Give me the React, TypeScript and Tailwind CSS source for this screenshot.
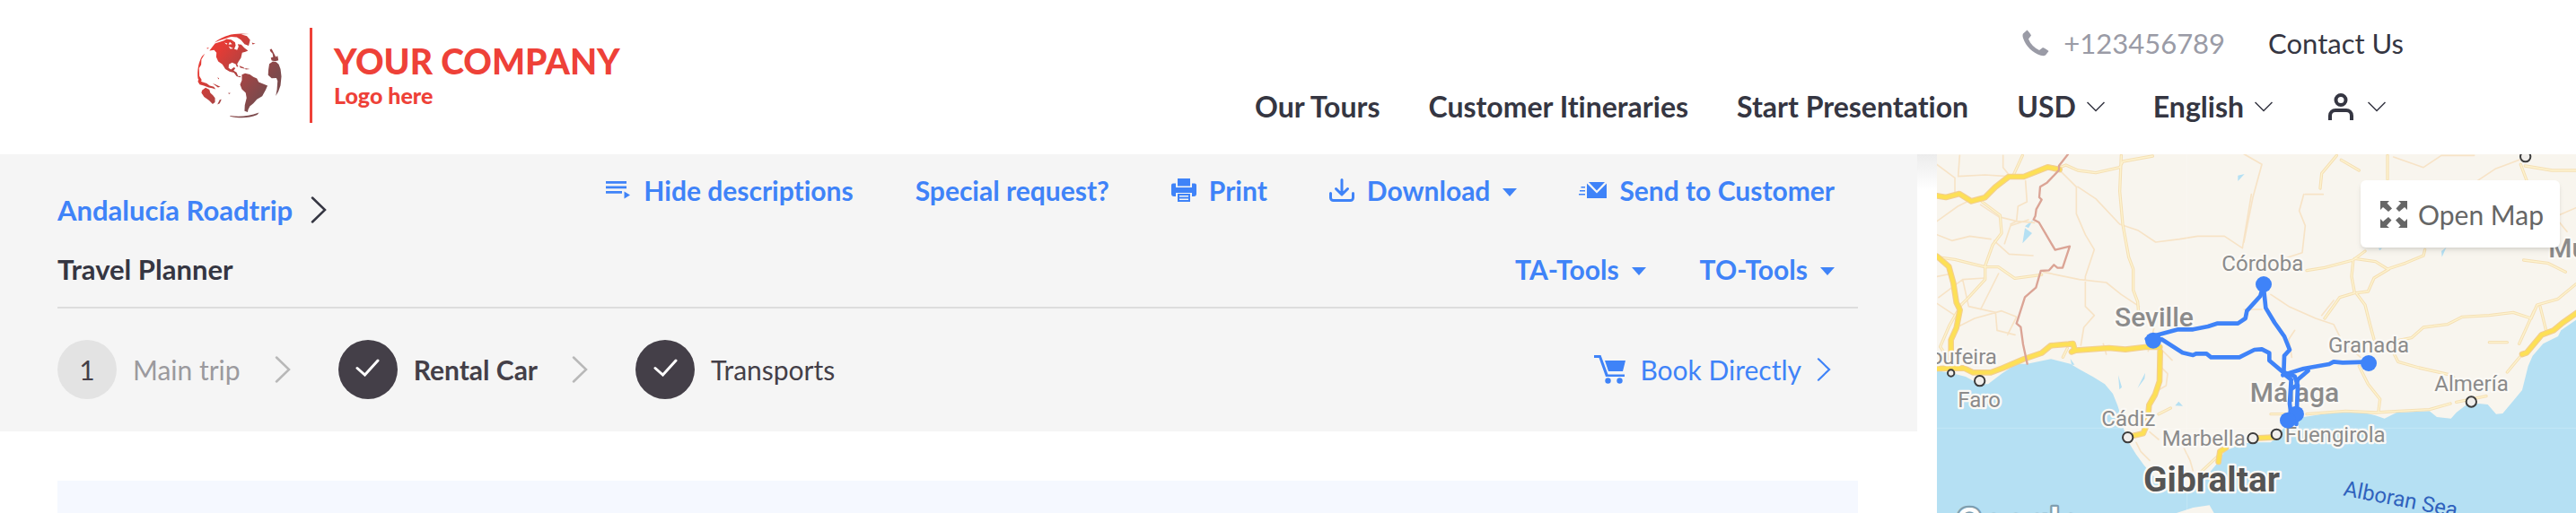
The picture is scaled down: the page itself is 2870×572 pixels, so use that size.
import type { ReactNode } from "react";

const navLinks = ["Our Tours", "Customer Itineraries", "Start Presentation"];

const steps = [
  { label: "Main trip", done: false, tone: "text-[#9b9a9e]" },
  { label: "Rental Car", done: true, tone: "font-bold text-[#443f48]" },
  { label: "Transports", done: true, tone: "text-[#443f48]" },
];

function ChevronDown() {
  return (
    <svg className="h-3 w-5 shrink-0" viewBox="0 0 20 12" fill="none" stroke="currentColor" strokeWidth="1.5" aria-hidden="true">
      <path d="M0.5 1 10 10.5 19.5 1" />
    </svg>
  );
}

function ChevronRight({ className }: { className: string }) {
  return (
    <svg className={className} viewBox="0 0 18 30" fill="none" stroke="currentColor" strokeWidth="2.5" strokeLinecap="round" aria-hidden="true">
      <path d="M2 1.5 16 15 2 28.5" />
    </svg>
  );
}

function Caret() {
  return (
    <svg className="mt-1 h-[9px] w-4 shrink-0" viewBox="0 0 16 9" fill="currentColor" aria-hidden="true">
      <path d="M0 0h16L8 9z" />
    </svg>
  );
}

function Globe() {
  return (
    <svg className="size-24 shrink-0" viewBox="59 45 289 292" fill="url(#globe)" aria-hidden="true">
      <defs>
        <linearGradient id="globe" gradientUnits="userSpaceOnUse" x1="130" y1="110" x2="290" y2="240">
          <stop offset="0" stopColor="#e53b35" />
          <stop offset="0.55" stopColor="#a64444" />
          <stop offset="1" stopColor="#7c4a4c" />
        </linearGradient>
      </defs>
      <path d="M118 80C145 56 185 45 236 51l-28 1 20 6 11 13-5 20-14-6-12-14-14-9-20-2-18 6-20 6z" />
      <path d="M101 107l19-24 30-10 9-5 16 2 13 9 2 11-5 11 10 4 5-11-3-9 12 2 11 11 12 9-9 4-11 3-4 18-8 12-5 9 4 8-5 1-4-9-12-5-11 6-1 12 8 5 10-7 5 3-6 8 10 6 5 12 10 1-3 4-12-4-9-12-15-4-14-8-10-16-14-10-7-15 1-15-8-9z" />
      <path d="M211 189l11-5 16 4 12 8 12 6 6 12 30 12-6 14-12 22-18 10-12 14-12 10-6 12-1 8-11-4 1-20 6-24-3-18-13-12-6-16 6-14z" />
      <path d="M304 152l12-8 12 2 8 8 6 16 3 25-3 30-7 20-9 16 4-22 2-29-4-10-16 1-12-11 1-18z" />
      <path d="M306 103l6-2 7 14 7 14 6-4 3 15-11 3-12-2-3-9 8-3-2-12-8-8z" />
      <path d="M76 242l12-9 13 7 3 10 9 9 7 9v14l-8 6-12-12-17-12-9-14z" />
      <path d="M62 202c-3-28 2-56 14-76l10-9-12 20-1 18-7 12 1 26 8 14-5 7zM64 205l12 8 16 5 10 8 14 4 6 8-12-4-12-2-16-6-14-4-6-10z" />
      <path d="M171 328c32 5 62 2 98-11l-6 8c-30 12-60 12-92 5zM128 198l6 3-2 4zM112 218l10 4 16 8-8 2zM136 274l6-2-6 14-8 4zM165 250l8 1-6 4zM92 98l8-1-6 5zM245 80l12 4-10 2zM202 158l14 6 6 5-16-4zM222 167l16 3-14 1z" />
      <path d="M152 80l10 3-3 4zM170 78l8 7-12 2zM166 92l16 8-10 1zM186 70l8 6-4 3zM176 62l12 2-10 2z" fill="#fff" />
    </svg>
  );
}

function PhoneIcon() {
  return (
    <svg className="size-[30px]" viewBox="0 0 30 30" fill="currentColor" aria-hidden="true">
      <path d="M5.500.5c1.800 1.800 3.600 4 4.500 6L7 10.500c2.500 6 6.500 10 12 12.500l4-3c2.500.8 4.500 2.300 6.500 4l-3.500 4.500c-1.500 1-3.500.8-5.500.2C11.500 26 4 18.500 1 9.500.4 7.500.3 5.700 1 4.500z" />
    </svg>
  );
}

function UserIcon() {
  return (
    <svg className="h-[30px] w-7" viewBox="0 0 28 30" fill="none" stroke="currentColor" strokeWidth="4" aria-hidden="true">
      <circle cx="14" cy="7.500" r="5.500" />
      <path d="M2 30v-5a6 6 0 0 1 6-6h12a6 6 0 0 1 6 6v5" />
    </svg>
  );
}

function DescriptionIcon() {
  return (
    <svg className="h-5 w-7" viewBox="0 0 28 20" fill="currentColor" aria-hidden="true">
      <path d="M0 0h23v2.700H0zM0 5.500h23v2.700H0zM0 11h18v2.700H0zM20.500 11.500l6.500 4-6.500 4z" />
    </svg>
  );
}

function PrintIcon() {
  return (
    <svg className="h-[26px] w-7" viewBox="0 0 28 26" fill="currentColor" aria-hidden="true">
      <path d="M7 0h14v8.500H7z" />
      <path d="M2 5.500h3V10h18V5.500h3a2 2 0 0 1 2 2V17a3 3 0 0 1-3 3h-2v-4H5v4H3a3 3 0 0 1-3-3V7.500a2 2 0 0 1 2-2z" />
      <path fillRule="evenodd" d="M7 17h14v9H7zM9 19v1.500h10V19zM9 22.500V24h10v-1.500z" />
    </svg>
  );
}

function DownloadIcon() {
  return (
    <svg className="h-[26px] w-7" viewBox="0 0 28 26" fill="none" stroke="currentColor" strokeWidth="3" strokeLinecap="round" strokeLinejoin="round" aria-hidden="true">
      <path d="M14 1.500v16M7.500 11.500l6.500 6.500 6.500-6.500M1.500 16.500v5a3 3 0 0 0 3 3h19a3 3 0 0 0 3-3v-5" />
    </svg>
  );
}

function SendIcon() {
  return (
    <svg className="h-[18px] w-[31px]" viewBox="0 0 31 18" fill="currentColor" aria-hidden="true">
      <path d="M11 0h18l-9 9.500zM9 1.500l11 11 11-11V18H9zM2.500 5H7v1.500H2.500zM1 9h6v1.500H1zM0 13h7v1.500H0z" />
    </svg>
  );
}

function CartIcon() {
  return (
    <svg className="h-8 w-[35px]" viewBox="0 0 35 32" fill="currentColor" aria-hidden="true">
      <path d="M0 0h7.500l8 21.500H34V24H13L5.500 3H0zM12 6h23l-3 12H16z" />
      <circle cx="15.500" cy="28.500" r="3.200" />
      <circle cx="28.500" cy="28.500" r="3.200" />
    </svg>
  );
}

function ExpandIcon() {
  return (
    <svg className="size-[30px]" viewBox="0 0 30 30" fill="currentColor" aria-hidden="true">
      <path d="M0 0h10L7.500 2.500l5.500 6L9 12 3 7 0 10zM30 0v10l-3-3-6 5-3.500-3.500 5.500-6L20 0zM0 30V20l3 3 6-5 3.500 3.500-5.500 6L10 30zM30 30H20l2.500-2.500-5.500-6L21 18l6 5 3-3z" />
    </svg>
  );
}

function ToolButton({ icon, caret, children }: { icon?: ReactNode; caret?: boolean; children: ReactNode }) {
  return (
    <button type="button" className="flex items-center gap-[14px] font-bold text-[#3f83f8]">
      {icon}
      <span>{children}</span>
      {caret ? <Caret /> : null}
    </button>
  );
}

function PlainSelect({ label, options }: { label: string; options: string[] }) {
  return (
    <label className="flex items-center gap-3">
      <select aria-label={label} className="field-sizing-content appearance-none bg-transparent font-bold">
        {options.map((option) => (
          <option key={option}>{option}</option>
        ))}
      </select>
      <ChevronDown />
    </label>
  );
}

function Header() {
  return (
    <header className="flex items-start justify-between bg-white pr-48 pl-[219px] text-[#353642]">
      <a href="#" className="mt-[31px] flex h-[106px] items-center text-[#ee4138]">
        <Globe />
        <span className="ml-[30px] h-full w-[3px] bg-[#ee4138]" />
        <span className="ml-6 flex flex-col gap-1">
          <span className="text-[39px] leading-[40px] font-black">YOUR COMPANY</span>
          <span className="text-[25px] leading-[28px] font-black">Logo here</span>
        </span>
      </a>
      <div className="flex flex-col items-end gap-[31px] pt-7 pb-[33px]">
        <div className="flex items-center gap-12 text-[31px]">
          <a href="tel:+123456789" className="flex items-center gap-4 text-[#9a9ba6]">
            <PhoneIcon />
            +123456789
          </a>
          <a href="#">Contact Us</a>
        </div>
        <nav className="mr-5 flex items-center gap-[54px] text-[32px] font-bold">
          {navLinks.map((link) => (
            <a key={link} href="#">
              {link}
            </a>
          ))}
          <PlainSelect label="Currency" options={["USD", "EUR"]} />
          <PlainSelect label="Language" options={["English", "Español"]} />
          <button type="button" aria-label="Account" className="flex items-center gap-4 pl-2">
            <UserIcon />
            <ChevronDown />
          </button>
        </nav>
      </div>
    </header>
  );
}

function PlannerPanel() {
  return (
    <section className="bg-[#f5f5f5] pr-[66px] pl-16">
      <div className="flex items-end justify-between border-b-2 border-[#dddddd] pt-5 pb-[22px]">
        <div className="flex flex-col gap-[26px] text-[31px]">
          <a href="#" className="flex items-center gap-5 font-bold text-[#3f83f8]">
            Andalucía Roadtrip
            <ChevronRight className="h-[30px] w-[18px] text-[#353642]" />
          </a>
          <h1 className="font-bold text-[#353642]">Travel Planner</h1>
        </div>
        <div className="flex flex-col items-end gap-12 pr-[26px]">
          <div className="flex items-center gap-[69px]">
            <ToolButton icon={<DescriptionIcon />}>Hide descriptions</ToolButton>
            <ToolButton>Special request?</ToolButton>
            <ToolButton icon={<PrintIcon />}>Print</ToolButton>
            <ToolButton icon={<DownloadIcon />} caret>
              Download
            </ToolButton>
            <ToolButton icon={<SendIcon />}>Send to Customer</ToolButton>
          </div>
          <div className="flex items-center gap-[60px]">
            <ToolButton caret>TA-Tools</ToolButton>
            <ToolButton caret>TO-Tools</ToolButton>
          </div>
        </div>
      </div>
      <div className="flex items-center justify-between pt-[35px] pr-[29px] pb-9">
        <ol className="flex items-center">
          {steps.map((step, index) => (
            <li key={step.label} className="flex items-center">
              {index > 0 ? <ChevronRight className="mr-[53px] ml-[38px] h-[30px] w-[18px] text-[#b8b8b8]" /> : null}
              <a href="#" className={`flex items-center gap-[18px] ${step.tone}`}>
                {step.done ? (
                  <span className="flex size-[66px] items-center justify-center rounded-full bg-[#443f48]">
                    <svg className="mb-1 h-5 w-[27px]" viewBox="0 0 27 20" fill="none" stroke="#fff" strokeWidth="3" strokeLinecap="round" aria-hidden="true">
                      <path d="M2 10.500 10.500 18 25 2" />
                    </svg>
                  </span>
                ) : (
                  <span className="flex size-[66px] items-center justify-center rounded-full bg-[#e3e3e3] text-[#443f48]">
                    {index + 1}
                  </span>
                )}
                {step.label}
              </a>
            </li>
          ))}
        </ol>
        <a href="#" className="flex items-center gap-4 text-[#3f83f8]">
          <CartIcon />
          Book Directly
          <ChevronRight className="h-[26px] w-[18px]" />
        </a>
      </div>
    </section>
  );
}

const minorRoads = [
  "M24 55l60 45 0 60M100 25l-5 70 90-5 75 5M245 25l0 40 20 25M320 110l5 70-30 15-5 50-20 10M24 245l70-50 30-15M24 290l50 20 60-15 70 10M170 190l60 40 60 15 60 5M215 310l50 45 80 5M250 320l20-60 60-20M430 70l60 60 0 90 30 70 30 50-30 90 0 100 30 30-35 40-10 60M495 130l60 40 80 85 60 20 60 40 80-10 60-10 90 0 60 40 30-180M380 415l120 25 90 10 50 40 60 40M24 430l50-10M30 500l80-60 75-5M90 600l60-30 90-25 50 20-30 60M110 440l20 90 90 20 5 60 60 15M24 520l60 40M230 420l-60 120M1050 540l60 0",
  "M750 600l-20 80M590 690l-10-35M780 680l30 30M770 730l25 25-5 40-35 20M690 985l15 30 30 30M850 1005l20 40 10 35M735 950l30 25",
];

const southRoads = [
  "M0 20l60 35-30 110-30 150M200 155l-15 55 20 50-10 90-60 20M205 155l60 0M500 30l100 35 60-40 110 0M90 490l60 40 90 40 60 20 30 60 60 50M260 560l40-50M170 610l-20 30 10 60M1110 200l-70 30 40 50M780 110l60-40 80-30",
];

const mainRoads = [
  "M310 25l-30 65M175 180l60 45 5 60-30 40-25 70 0 45-60 65-20 20-40 70-30 70 20 30M24 365l60 8 100 25 45 0 55 38 90-12M435 65l20-8 40 18 60 8 80-18 10-20 100-18M640 25l-5 120 10 110 20 110 15 40 0 70 15 40 5 60M765 890l40-20M460 670l-15 30M985 1010l-80 75",
  "M1260 410l60-10 95-25 40-30M1360 25l-50 60-5 50M1375 40l60 35M1420 370l70 10 40 25 60-20 60-25 5-20M1415 380l-5 50 10 55-50 15-50 70M1535 405l-50 30-20 45-40 5 30 40 15 60 15 55M1530 25l0 80M1975 55l30 80-40 40 30 90M1990 60l90 15 80 0",
  "M2010 570l-60-20-80 10-90 5-50 25-80 10-40 35-50 10-15 30 20 40 70 20 110 25 20 25M2010 570l20-45 70-20 60-50M1435 730l30 60 40 50-5 40M1260 890l130-10 100 5 80-5 100-5 70-20M1760 850l100-20M1980 690l-50 60M1970 655l50-110M2040 530l20 80M1985 375l80 10 60 30M1870 650l60 0M1140 890l90 0",
];

const highways = [
  "M24 160l30 5 45-12 40 25 45-12 35-35 45-35 50 0 80-32 40 8",
  "M24 362l40 35 15 55 10 65 12 25-12 60-18 40 0 65",
  "M24 738l90-2 30 15 60 0 40-15 70-30 60-20 30-25 60-5 15-2 5 20-10 8 15-5 110-8 55 5 65-8 50 0",
  "M770 680l-2 100-15 45-20 35-5 60-15 35-35 8",
  "M965 1050l5-35 20-12M1100 970l60-3",
  "M1980 690l15-5 50-60 40-15 30-25 50-35",
];

const routes = [
  "M1115 460l-10 35-45 50-5 25-25 17-70 0-30 10-50 10-50 0-75 20-30 12",
  "M745 640l30 0 70 45 35 8 10-5 35 0 15 12 95 0 50-25 25-2 25 13 0 25 45 38 40 15 10 30-5 130",
  "M1115 460l8 75 30 50 32 45 18 45-18 20-2 60 25 20-5 80 5 40",
  "M1180 760l70-22 85-15 15-8 30 3 75-2M1265 745l-35 30-5 20-15 10",
];

const townDots = [
  { x: 71, y: 753, r: 11 },
  { x: 167, y: 779, r: 17 },
  { x: 662, y: 968, r: 17 },
  { x: 1080, y: 971, r: 17 },
  { x: 1159, y: 958, r: 17 },
  { x: 1810, y: 849, r: 17 },
  { x: 1991, y: 29, r: 17 },
];

const routeStops = [
  { x: 747, y: 644 },
  { x: 1116, y: 456 },
  { x: 1467, y: 720 },
  { x: 1224, y: 890 },
  { x: 1197, y: 911 },
];

const mapLabels = [
  { name: "oufeira", x: 2, y: 722, style: "text-[72px]" },
  { name: "Faro", x: 94, y: 868, style: "text-[72px]" },
  { name: "Seville", x: 618, y: 596, style: "text-[90px] font-medium" },
  { name: "Córdoba", x: 976, y: 412, style: "text-[72px]" },
  { name: "Granada", x: 1332, y: 683, style: "text-[72px]" },
  { name: "Almería", x: 1687, y: 812, style: "text-[72px]" },
  { name: "Málaga", x: 1070, y: 848, style: "text-[90px] font-medium" },
  { name: "Cádiz", x: 574, y: 931, style: "text-[72px]" },
  { name: "Marbella", x: 776, y: 995, style: "text-[72px]" },
  { name: "Fuengirola", x: 1187, y: 983, style: "text-[72px]" },
  { name: "Mu", x: 2068, y: 366, style: "text-[90px] font-medium" },
];

function MapDrawing() {
  return (
    <svg className="h-full w-full bg-[#b5e0f3] font-['Roboto',sans-serif]" viewBox="24 21 2136 1200" preserveAspectRatio="xMinYMin slice" fill="none" strokeLinejoin="round" strokeLinecap="round" role="img" aria-label="Trip map">
      <path
        fill="#f8f5ee"
        d="M24 0V745l46 7 50 13 45 25h30l45-35 50-33h35l80-16 65 16 30 18 45 25 40 25 27 32 16 40 12 38 8 40 20 50 22 35 25 35 30 35 45 35 30 15 40-15 40-30 40-20 25-30 20-35 55-25 40-5h60l10-10 35-40 15-30 50-5 130-20 70 5 40 10 30 10 40-20 110-5 25 20 47 5 18-20 30-23 45-7 30 3 28 32 22-2 65-78 20-80 15-35 35-40 50-25 10-20 50-35V0zM825 1221l55-18 55-8 15 26z"
      />
      <path fill="#b5e0f3" d="M318 262l28-22-16 28zM318 268l24 17-32 34zM630 760l12 40-8 8zM720 752l-2 20-24 32zM820 862l12-14 14 15zM1030 92l22-5-22 24zM1500 335l12 0-8 8zM1710 345l16-12-14 32zM470 705l14 20-10 0z" />
      <g stroke="#f7e3c6" strokeWidth="5">
        {minorRoads.map((d) => (
          <path key={d} d={d} />
        ))}
        {southRoads.map((d) => (
          <path key={d} d={d} transform="translate(1050 0)" />
        ))}
      </g>
      {mainRoads.map((d) => (
        <g key={d}>
          <path d={d} stroke="#f5dfb4" strokeWidth="10" />
          <path d={d} stroke="#fdf3cf" strokeWidth="4" />
        </g>
      ))}
      {highways.map((d) => (
        <g key={d}>
          <path d={d} stroke="#f3cf8e" strokeWidth="20" />
          <path d={d} stroke="#fde056" strokeWidth="13" />
        </g>
      ))}
      <path stroke="#dba495" strokeWidth="7" d="M462 21l-30 38 0 15-40 42-23 14-3 35 8 8-18 32-3 22-6 12 18 10 54 92 49-12-24 72-17 0-12-10-16 18-28 2-16 56-37 32-28 88 14 12 8 58 14 65" />
      <path stroke="#fff" strokeOpacity="0.3" strokeWidth="2" d="M24 937h2136M860 21v1200" />
      {townDots.map((dot) => (
        <circle key={dot.x} cx={dot.x} cy={dot.y} r={dot.r} fill="#f1efec" stroke="#3d3d3d" strokeWidth="6" />
      ))}
      <g fill="#8b8b8b" stroke="#fbf9f5" strokeWidth="14" className="[paint-order:stroke]">
        {mapLabels.map((label) => (
          <text key={label.name} x={label.x} y={label.y} className={label.style}>
            {label.name}
          </text>
        ))}
        <text x="714" y="1149" fill="#555" className="text-[117px] font-bold">
          Gibraltar
        </text>
      </g>
      <text x="1380" y="1162" transform="rotate(11 1380 1162)" fill="#2f62bd" className="text-[72px]">
        Alboran Sea
      </text>
      <text x="86" y="1298" fill="#fff" stroke="#7f9fb0" strokeWidth="14" className="text-[132px] font-medium [paint-order:stroke]">
        Google
      </text>
      <g stroke="#3f83f8" strokeWidth="14">
        {routes.map((d) => (
          <path key={d} d={d} />
        ))}
      </g>
      {routeStops.map((stop) => (
        <circle key={stop.x} cx={stop.x} cy={stop.y} r="27" fill="#3f83f8" />
      ))}
    </svg>
  );
}

export default function App() {
  return (
    <div className="bg-white font-['Lato',sans-serif] text-[30px] leading-[40px] [font-variant-ligatures:none]">
      <Header />
      <div className="flex">
        <main className="min-w-0 flex-1">
          <PlannerPanel />
          <div className="mt-[55px] mr-[66px] ml-16 h-9 bg-[#f5f8ff]" />
        </main>
        <div className="w-[22px] shrink-0 bg-linear-to-b from-[#ececec] to-white to-10%" />
        <aside className="relative h-[400px] w-[712px] shrink-0 overflow-hidden">
          <MapDrawing />
          <button type="button" className="absolute top-[29px] right-[18px] flex h-[75px] items-center gap-3 rounded-md bg-white pr-[18px] pl-[22px] text-[#666666] shadow-md">
            <ExpandIcon />
            Open Map
          </button>
        </aside>
      </div>
    </div>
  );
}
